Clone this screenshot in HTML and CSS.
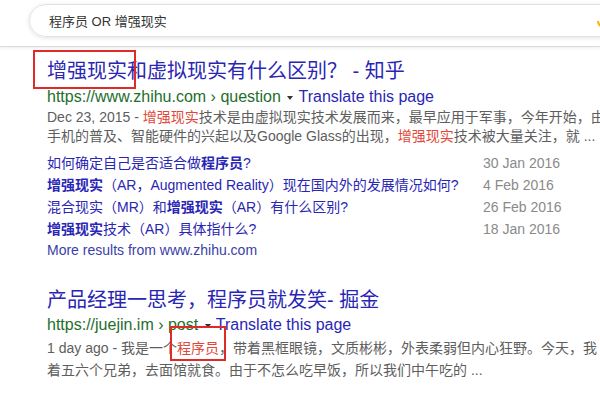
FILE: index.html
```html
<!DOCTYPE html>
<html lang="zh-CN">
<head>
  <meta charset="UTF-8" />
  <title>程序员 OR 增强现实 - 搜索</title>
  <meta name="viewport" content="width=device-width, initial-scale=1" />
  <link rel="stylesheet" href="styles.css">
</head>
<body>
  <div class="header">
    <div class="search-box">
      <span class="query">程序员 OR 增强现实</span>
      <svg class="mic" width="14" height="20" viewBox="0 0 14 20">
        <rect x="3" y="0" width="8" height="13" rx="4" fill="#4285f4" />
        <path d="M1 9 a6 6 0 0 0 12 0" fill="none" stroke="#f4b400" stroke-width="2" />
        <rect x="6" y="15" width="2" height="4" fill="#34a853" />
      </svg>
    </div>
  </div>

  <div class="results">
    <div class="result">
      <div class="title"><span class="boxed boxed-title">增强现实</span>和虚拟现实有什么区别？ - 知乎</div>
      <div class="url">
        https://www.zhihu.com › question <span class="arrow"></span> <span class="translate">Translate this page</span>
      </div>
      <div class="snippet">
        Dec 23, 2015 - <span class="hl">增强现实</span>技术是由虚拟现实技术发展而来，最早应用于军事，今年开始，由<br />
        手机的普及、智能硬件的兴起以及Google Glass的出现，<span class="hl">增强现实</span>技术被大量关注，就 ...
      </div>
      <div class="sitelinks">
        <div class="link">如何确定自己是否适合做<b>程序员</b>?</div>
        <div class="date">30 Jan 2016</div>
        <div class="link"><b>增强现实</b>（AR，Augmented Reality）现在国内外的发展情况如何?</div>
        <div class="date">4 Feb 2016</div>
        <div class="link">混合现实（MR）和<b>增强现实</b>（AR）有什么区别?</div>
        <div class="date">26 Feb 2016</div>
        <div class="link"><b>增强现实</b>技术（AR）具体指什么?</div>
        <div class="date">18 Jan 2016</div>
      </div>
      <div class="more">More results from www.zhihu.com</div>
    </div>

    <div class="result second">
      <div class="title">产品经理一思考，程序员就发笑- 掘金</div>
      <div class="url">
        https://juejin.im › post <span class="arrow"></span> <span class="translate">Translate this page</span>
      </div>
      <div class="snippet snippet-tall">
        1 day ago - 我是一个<span class="hl boxed boxed-snippet">程序员</span>，带着黑框眼镜，文质彬彬，外表柔弱但内心狂野。今天，我<br />
        着五六个兄弟，去面馆就食。由于不怎么吃早饭，所以我们中午吃的 ...
      </div>
    </div>
  </div>
</body>
</html>
```

FILE: styles.css
```css
body {
  margin: 0;
  background: white;
  font-family: "Liberation Sans", Arial, "Noto Sans CJK SC", sans-serif;
  overflow: hidden;
  width: 600px;
  height: 400px;
}

.header {
  height: 47px;
  border-bottom: 1px solid #dcdcdc;
  box-shadow: 0 1px 3px rgba(0, 0, 0, 0.08);
  padding-top: 4px;
  box-sizing: border-box;
}

.search-box {
  margin-left: 29px;
  width: 620px;
  height: 33px;
  border: 1px solid #e2e2e2;
  border-radius: 17px;
  box-shadow: 0 1px 4px rgba(0, 0, 0, 0.12);
  display: flex;
  align-items: center;
  padding-left: 19px;
  box-sizing: border-box;
  position: relative;
}

.query {
  font-size: 13px;
  color: #333;
}

.mic {
  position: absolute;
  left: 567px;
  top: 7px;
}

.results {
  padding-left: 47px;
  white-space: nowrap;
}

.result {
  padding-top: 12px;
}

.result.second {
  padding-top: 27px;
}

.title {
  font-size: 20px;
  line-height: 24px;
  color: #2a26b4;
}

.url {
  margin-top: 4px;
  font-size: 16px;
  line-height: 20px;
  color: #1e6e2c;
}

.second .url {
  margin-top: 3px;
}

.arrow {
  display: inline-block;
  width: 0;
  height: 0;
  border-left: 3px solid transparent;
  border-right: 3px solid transparent;
  border-top: 4px solid #333;
  vertical-align: middle;
  margin: 0 1px 0 2px;
}

.translate {
  color: #2a26b4;
}

.snippet {
  margin-top: 1px;
  font-size: 14px;
  line-height: 19px;
  color: #5e5e5e;
}

.snippet-tall {
  margin-top: 2px;
  line-height: 22px;
}

.hl {
  color: #e0493a;
}

.sitelinks {
  display: grid;
  grid-template-columns: 436px auto;
  margin-top: 6px;
  font-size: 14px;
  line-height: 22px;
}

.link {
  color: #2a26b4;
}

.link b {
  font-weight: bold;
}

.date {
  color: #8a8a8a;
}

.more {
  font-size: 14px;
  line-height: 21px;
  color: #3a40a8;
}

.boxed {
  display: inline-block;
  position: relative;
}

.boxed::after {
  content: "";
  position: absolute;
  border: 2px solid #e02a2a;
}

.boxed-title::after {
  left: -14px;
  right: -9px;
  top: -9px;
  bottom: -6px;
}

.boxed-snippet::after {
  left: -7px;
  right: -7px;
  top: -11px;
  bottom: -2px;
}
```
